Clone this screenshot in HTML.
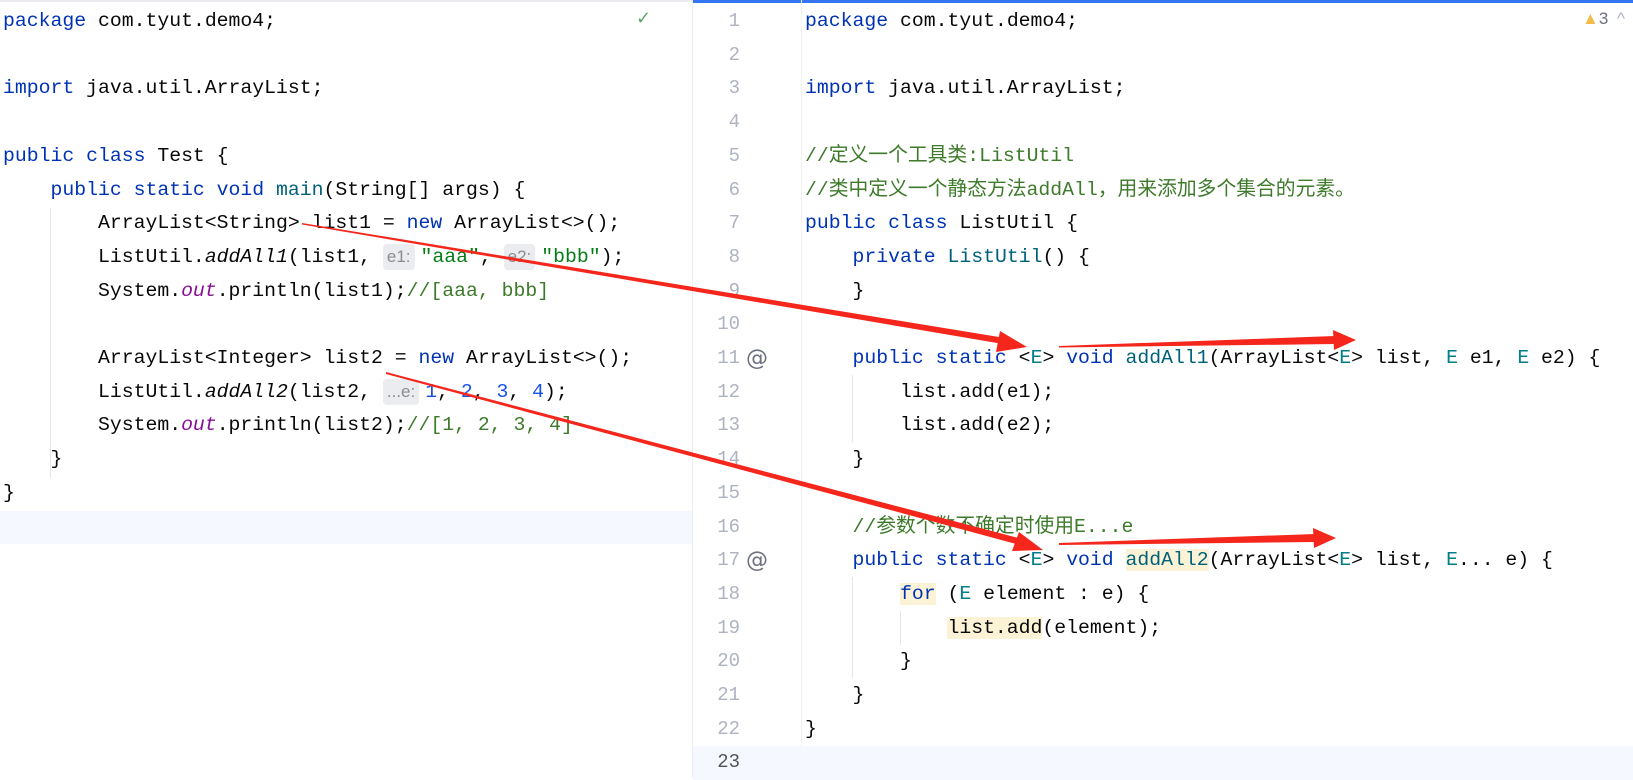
<!DOCTYPE html>
<html><head><meta charset="utf-8"><style>
body{margin:0;width:1633px;height:777px;overflow:hidden;background:#fff;position:relative;font-family:"Liberation Mono","Noto Sans CJK SC",monospace;font-size:19.8px;color:#080808}
.l{position:absolute;height:33.7px;line-height:33.7px;white-space:pre}
.k{color:#0033b3}.s{color:#067d17}.c{color:#3d7a2a}.n{color:#1750eb}.t{color:#007e8a}.m{color:#00627a}.o{color:#871094;font-style:italic}.i{font-style:italic}
.h{display:inline-block;background:#ebecf0;color:#8c8c8c;font-family:"Liberation Sans",sans-serif;font-size:17px;border-radius:4px;padding:0 4px;line-height:26px;margin:0 6px 0 0}
.y{background:#fcf3d6}
.ln{position:absolute;width:48px;text-align:right;left:692px;color:#aeb3c2;height:33.7px;line-height:33.7px;font-size:19px}
.g{position:absolute;width:1px;background:#e6e6e6}
</style></head><body>
<div style="position:absolute;left:0;top:0;width:692px;height:2px;background:#ebecf0"></div>
<div style="position:absolute;left:693px;top:0;width:940px;height:3px;background:#3574f0"></div>
<div style="position:absolute;left:692px;top:0;width:1px;height:777px;background:#ebecf0"></div>
<div style="position:absolute;left:801px;top:0;width:1px;height:777px;background:#f0f0f0"></div>
<div style="position:absolute;left:0;top:510.5px;width:692px;height:33.7px;background:#f5f8fe"></div>
<div style="position:absolute;left:693px;top:746px;width:940px;height:33.7px;background:#f5f8fe"></div>
<div style="position:absolute;left:636px;top:8px;color:#5fa36a;font-size:18px;font-family:'DejaVu Sans'">✓</div>
<div style="position:absolute;left:1582px;top:9px;font-family:'Liberation Sans',sans-serif;font-size:17px;color:#6c707e"><span style="color:#f2bd4a">▲</span>3 <span style="color:#aeb3c2;margin-left:4px">^</span></div>
<!-- indent guides left -->
<div class="g" style="left:50px;top:208px;height:270px"></div>
<!-- right guides -->
<div class="g" style="left:852px;top:375px;height:67px"></div>
<div class="g" style="left:900px;top:611px;height:34px"></div>
<div class="g" style="left:852px;top:577px;height:101px"></div>
<!-- left code -->
<div class="l" style="left:3px;top:5px"><span class="k">package</span> com.tyut.demo4;</div>
<div class="l" style="left:3px;top:72.4px"><span class="k">import</span> java.util.ArrayList;</div>
<div class="l" style="left:3px;top:139.8px"><span class="k">public class</span> Test {</div>
<div class="l" style="left:3px;top:173.5px">    <span class="k">public static void</span> <span class="m">main</span>(String[] args) {</div>
<div class="l" style="left:3px;top:207.2px">        ArrayList&lt;String&gt; list1 = <span class="k">new</span> ArrayList&lt;&gt;();</div>
<div class="l" style="left:3px;top:240.9px">        ListUtil.<span class="i">addAll1</span>(list1, <span class="h">e1:</span><span class="s">"aaa"</span>, <span class="h">e2:</span><span class="s">"bbb"</span>);</div>
<div class="l" style="left:3px;top:274.6px">        System.<span class="o">out</span>.println(list1);<span class="c">//[aaa, bbb]</span></div>
<div class="l" style="left:3px;top:342px">        ArrayList&lt;Integer&gt; list2 = <span class="k">new</span> ArrayList&lt;&gt;();</div>
<div class="l" style="left:3px;top:375.7px">        ListUtil.<span class="i">addAll2</span>(list2, <span class="h">...e:</span><span class="n">1</span>, <span class="n">2</span>, <span class="n">3</span>, <span class="n">4</span>);</div>
<div class="l" style="left:3px;top:409.4px">        System.<span class="o">out</span>.println(list2);<span class="c">//[1, 2, 3, 4]</span></div>
<div class="l" style="left:3px;top:443.1px">    }</div>
<div class="l" style="left:3px;top:476.8px">}</div>
<!-- line numbers -->
<div class="ln" style="top:5px">1</div><div class="ln" style="top:38.7px">2</div><div class="ln" style="top:72.4px">3</div><div class="ln" style="top:106.1px">4</div><div class="ln" style="top:139.8px">5</div><div class="ln" style="top:173.5px">6</div><div class="ln" style="top:207.2px">7</div><div class="ln" style="top:240.9px">8</div><div class="ln" style="top:274.6px">9</div><div class="ln" style="top:308.3px">10</div><div class="ln" style="top:342px">11</div><div class="ln" style="top:375.7px">12</div><div class="ln" style="top:409.4px">13</div><div class="ln" style="top:443.1px">14</div><div class="ln" style="top:476.8px">15</div><div class="ln" style="top:510.5px">16</div><div class="ln" style="top:544.2px">17</div><div class="ln" style="top:577.9px">18</div><div class="ln" style="top:611.6px">19</div><div class="ln" style="top:645.3px">20</div><div class="ln" style="top:679px">21</div><div class="ln" style="top:712.7px">22</div><div class="ln" style="top:746.4px;color:#555">23</div>
<div style="position:absolute;left:746px;top:342px;line-height:33.7px;color:#6c707e;font-size:22px;font-family:'DejaVu Sans'">@</div>
<div style="position:absolute;left:746px;top:544.2px;line-height:33.7px;color:#6c707e;font-size:22px;font-family:'DejaVu Sans'">@</div>
<!-- right code -->
<div class="l" style="left:805px;top:5px"><span class="k">package</span> com.tyut.demo4;</div>
<div class="l" style="left:805px;top:72.4px"><span class="k">import</span> java.util.ArrayList;</div>
<div class="l" style="left:805px;top:139.8px"><span class="c">//定义一个工具类:ListUtil</span></div>
<div class="l" style="left:805px;top:173.5px"><span class="c">//类中定义一个静态方法addAll，用来添加多个集合的元素。</span></div>
<div class="l" style="left:805px;top:207.2px"><span class="k">public class</span> ListUtil {</div>
<div class="l" style="left:805px;top:240.9px">    <span class="k">private</span> <span class="m">ListUtil</span>() {</div>
<div class="l" style="left:805px;top:274.6px">    }</div>
<div class="l" style="left:805px;top:342px">    <span class="k">public static</span> &lt;<span class="t">E</span>&gt; <span class="k">void</span> <span class="m">addAll1</span>(ArrayList&lt;<span class="t">E</span>&gt; list, <span class="t">E</span> e1, <span class="t">E</span> e2) {</div>
<div class="l" style="left:805px;top:375.7px">        list.add(e1);</div>
<div class="l" style="left:805px;top:409.4px">        list.add(e2);</div>
<div class="l" style="left:805px;top:443.1px">    }</div>
<div class="l" style="left:805px;top:510.5px">    <span class="c">//参数个数不确定时使用E...e</span></div>
<div class="l" style="left:805px;top:544.2px">    <span class="k">public static</span> &lt;<span class="t">E</span>&gt; <span class="k">void</span> <span class="m y">addAll2</span>(ArrayList&lt;<span class="t">E</span>&gt; list, <span class="t">E</span>... e) {</div>
<div class="l" style="left:805px;top:577.9px">        <span class="k y">for</span> (<span class="t">E</span> element : e) {</div>
<div class="l" style="left:805px;top:611.6px">            <span class="y">list.add</span>(element);</div>
<div class="l" style="left:805px;top:645.3px">        }</div>
<div class="l" style="left:805px;top:679px">    }</div>
<div class="l" style="left:805px;top:712.7px">}</div>
<svg style="position:absolute;left:0;top:0" width="1633" height="777">
<g fill="#f5261c">
<polygon points="302,223 1005,338 1003,344 302,224.5"/><polygon points="1027,347 1000,331 996,352"/>
<polygon points="1059,346 1335,336 1335,344 1059,347.5"/><polygon points="1356,340 1333,330 1334,350"/>
<polygon points="386,372 1022,539 1020,545 386,374"/><polygon points="1043,550 1019,532 1012,551"/>
<polygon points="1059,543 1315,534 1315,542 1059,545"/><polygon points="1336,538 1313,528 1314,548"/>
</g></svg>
</body></html>
